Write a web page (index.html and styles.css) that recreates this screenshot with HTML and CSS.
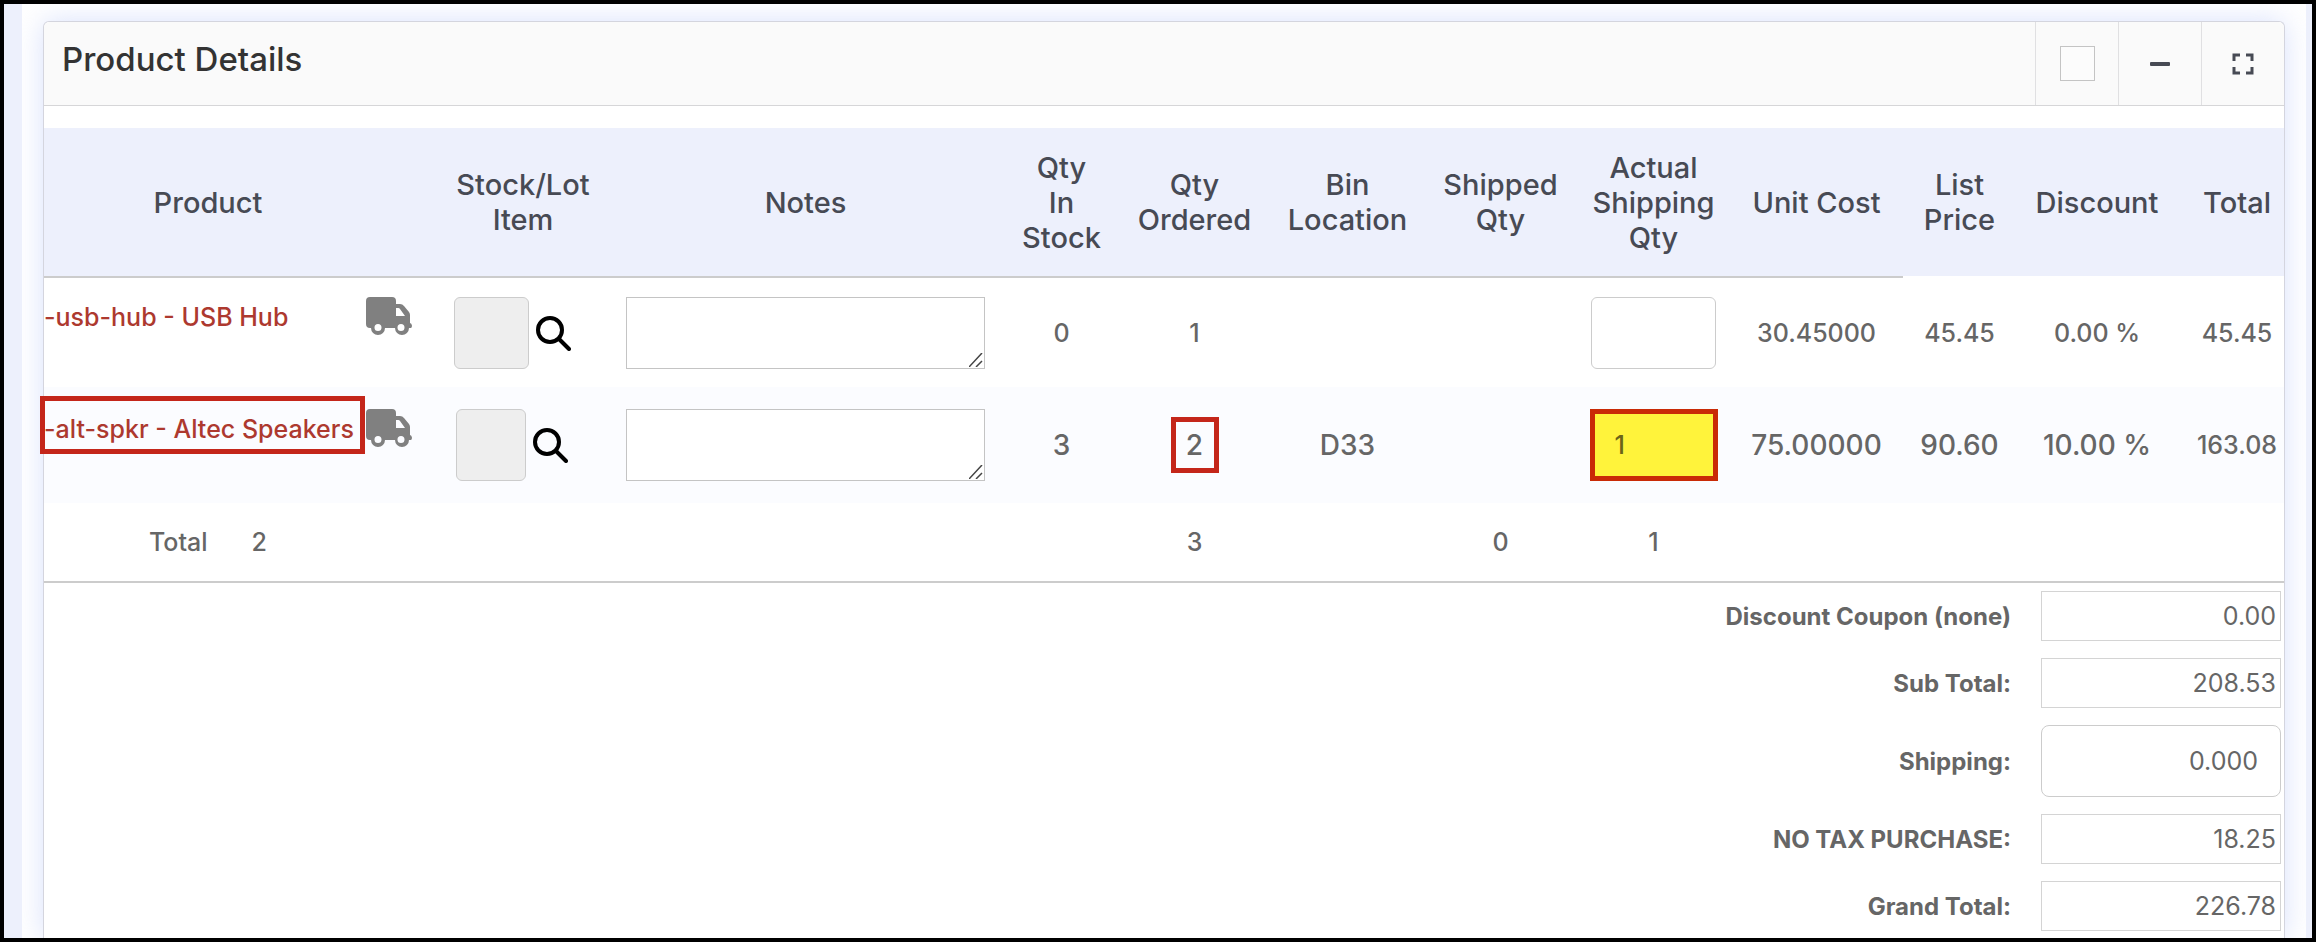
FILE: index.html
```html
<!DOCTYPE html>
<html lang="en">
<head>
    <meta charset="UTF-8">
    <meta name="viewport" content="width=device-width, initial-scale=1.0">
    <title>Product Details</title>
    <link rel="stylesheet" href="styles.css">
</head>
<body>

    <svg class="sprite" aria-hidden="true">
        <symbol id="truck" viewBox="0 0 46 38">
            <path fill-rule="evenodd" d="M4 0h22a4 4 0 0 1 4 4v3h4a5 5 0 0 1 4 2l5 6a5 5 0 0 1 1 3v8a3 3 0 0 1 1 5h-2a7 7 0 0 1-14 0H19a7 7 0 0 1-14 0H4a4 4 0 0 1-4-4V4a4 4 0 0 1 4-4zM30 11v8h9l-5-7a2 2 0 0 0-2-1zM12 27a3 3 0 1 0 0 7a3 3 0 1 0 0-7zM35 27a3 3 0 1 0 0 7a3 3 0 1 0 0-7z"/>
        </symbol>
        <symbol id="search" viewBox="0 0 36 36">
            <circle cx="15" cy="15" r="12" fill="none" stroke="currentColor" stroke-width="4"/>
            <path d="M24 24l10 10" stroke="currentColor" stroke-width="4" stroke-linecap="round"/>
        </symbol>
        <symbol id="grip" viewBox="0 0 14 14">
            <path d="M0 14L13 0M7 14l6-6" fill="none" stroke="#444" stroke-width="1.5"/>
        </symbol>
    </svg>

    <main class="page">
        <section class="card">
            <header class="card-header">
                <h1>Product Details</h1>
                <div class="tools">
                    <label class="tool"><input type="checkbox" aria-label="Select product details"></label>
                    <button type="button" class="tool" aria-label="Collapse">
                        <svg width="20" height="4" viewBox="0 0 20 4"><rect width="20" height="4" rx="1"/></svg>
                    </button>
                    <button type="button" class="tool" aria-label="Full screen">
                        <svg width="22" height="24" viewBox="0 0 22 24"><path d="M2 9V3h6M14 3h6v6M2 15v6h6M14 21h6v-6" fill="none" stroke="currentColor" stroke-width="3"/></svg>
                    </button>
                </div>
            </header>

            <table class="items">
                <colgroup>
                    <col class="col-product">
                    <col class="col-stock">
                    <col class="col-notes">
                    <col class="col-short">
                    <col class="col-qty">
                    <col class="col-qty">
                    <col class="col-qty">
                    <col class="col-qty">
                    <col class="col-cost">
                    <col class="col-short">
                    <col class="col-discount">
                    <col class="col-total">
                </colgroup>
                <thead>
                    <tr>
                        <th class="product">Product</th>
                        <th>Stock/Lot<br>Item</th>
                        <th>Notes</th>
                        <th>Qty<br>In<br>Stock</th>
                        <th>Qty<br>Ordered</th>
                        <th>Bin<br>Location</th>
                        <th>Shipped<br>Qty</th>
                        <th>Actual<br>Shipping<br>Qty</th>
                        <th>Unit Cost</th>
                        <th class="plain">List<br>Price</th>
                        <th class="plain">Discount</th>
                        <th class="plain total">Total</th>
                    </tr>
                </thead>
                <tbody>
                    <tr>
                        <td>
                            <div class="product-cell">
                                <a href="#">-usb-hub - USB Hub</a>
                                <svg class="truck"><use href="#truck"/></svg>
                            </div>
                        </td>
                        <td>
                            <div class="stock-cell">
                                <input type="text" class="lot" aria-label="Stock or lot item" disabled>
                                <button type="button" class="search" aria-label="Find lot"><svg><use href="#search"/></svg></button>
                            </div>
                        </td>
                        <td>
                            <div class="notes-cell">
                                <textarea aria-label="Notes"></textarea>
                                <svg class="grip"><use href="#grip"/></svg>
                            </div>
                        </td>
                        <td>0</td>
                        <td>1</td>
                        <td></td>
                        <td></td>
                        <td><input type="text" class="ship-qty" aria-label="Actual shipping qty"></td>
                        <td>30.45000</td>
                        <td>45.45</td>
                        <td>0.00 %</td>
                        <td class="total">45.45</td>
                    </tr>
                    <tr class="current">
                        <td>
                            <div class="product-cell marked">
                                <a href="#">-alt-spkr - Altec Speakers</a>
                                <svg class="truck"><use href="#truck"/></svg>
                            </div>
                        </td>
                        <td>
                            <div class="stock-cell">
                                <input type="text" class="lot" aria-label="Stock or lot item" disabled>
                                <button type="button" class="search" aria-label="Find lot"><svg><use href="#search"/></svg></button>
                            </div>
                        </td>
                        <td>
                            <div class="notes-cell">
                                <textarea aria-label="Notes"></textarea>
                                <svg class="grip"><use href="#grip"/></svg>
                            </div>
                        </td>
                        <td>3</td>
                        <td><span class="marked-qty">2</span></td>
                        <td>D33</td>
                        <td></td>
                        <td><input type="text" class="ship-qty short" value="1" aria-label="Actual shipping qty"></td>
                        <td>75.00000</td>
                        <td>90.60</td>
                        <td>10.00 %</td>
                        <td class="total">163.08</td>
                    </tr>
                </tbody>
                <tfoot>
                    <tr>
                        <td class="product"><span class="count-label">Total</span>2</td>
                        <td></td>
                        <td></td>
                        <td></td>
                        <td>3</td>
                        <td></td>
                        <td>0</td>
                        <td>1</td>
                        <td></td>
                        <td></td>
                        <td></td>
                        <td></td>
                    </tr>
                </tfoot>
            </table>

            <form class="summary">
                <label for="coupon">Discount Coupon (none)</label>
                <input type="text" id="coupon" value="0.00" readonly>

                <label for="sub_total">Sub Total:</label>
                <input type="text" id="sub_total" value="208.53" readonly>

                <label for="shipping">Shipping:</label>
                <input type="text" id="shipping" class="editable" value="0.000">

                <label for="tax">NO TAX PURCHASE:</label>
                <input type="text" id="tax" value="18.25" readonly>

                <label for="grand_total">Grand Total:</label>
                <input type="text" id="grand_total" value="226.78" readonly>
            </form>
        </section>
    </main>

</body>
</html>
```
FILE: styles.css
```css
*,
*::before {
    box-sizing: border-box;
}

body {
    margin: 0;
    min-height: 100vh;
    display: flex;
    border: 4px solid #000;
    background: #edf0fc;
    font-family: Inter, "Liberation Sans", sans-serif;
    font-size: 25px;
    font-weight: 500;
    color: #666;
}

input, textarea, button {
    font: inherit;
    color: inherit;
    margin: 0;
}

.sprite {
    position: absolute;
    width: 0;
    height: 0;
}

.page {
    flex: 1;
    display: flex;
    margin: 0 6px 0 18px;
    padding: 17px 21px 0;
    background: #fff;
    overflow: hidden;
}

.card {
    flex: 1;
    min-width: 0;
    border: 1px solid #d4d5de;
    border-bottom: 0;
    border-radius: 6px 6px 0 0;
    background: #fff;
    box-shadow: 0 0 28px rgba(180, 195, 250, 0.5);
}

.card-header {
    display: flex;
    justify-content: space-between;
    height: 84px;
    border-bottom: 1px solid #d6d6d8;
    border-radius: 6px 6px 0 0;
    background: #fafafa;
}

.card-header h1 {
    margin: 0;
    padding-left: 18px;
    font-size: 33px;
    font-weight: 500;
    line-height: 74px;
    color: #333;
}

.tools {
    display: flex;
}

.tool {
    display: flex;
    align-items: center;
    justify-content: center;
    width: 83px;
    padding: 0;
    border: 0;
    border-left: 1px solid #e0e0e2;
    background: none;
    color: #474a54;
    fill: #474a54;
}

.tool input {
    appearance: none;
    width: 35px;
    height: 35px;
    border: 1px solid #c4c4c4;
    background: #fcfcfc;
}

.items {
    width: 100%;
    margin-top: 22px;
    table-layout: fixed;
    border-spacing: 0;
    text-align: center;
}

.col-product { width: 396px; }
.col-stock { width: 166px; }
.col-short { width: 113px; }
.col-qty { width: 153px; }
.col-cost { width: 173px; }
.col-discount { width: 162px; }
.col-total { width: 106px; }

.items th,
.items td {
    padding: 0;
}

.items th {
    height: 150px;
    border-bottom: 2px solid #ccc;
    background: #edf0fc;
    background-clip: padding-box;
    font-size: 29px;
    font-weight: 500;
    line-height: 35px;
    color: #474a54;
}

.items th.plain {
    border-bottom-color: transparent;
}

.items .product {
    padding-right: 68px;
}

.items .total {
    padding-left: 12px;
}

.items tbody td {
    height: 109px;
}

.items tbody .current td {
    height: 116px;
    background: #fbfcff;
    font-size: 28px;
}

.items tbody .current .total {
    font-size: 25px;
}

.items tfoot td {
    height: 80px;
    border-bottom: 2px solid #ccc;
}

.count-label {
    margin-right: 44px;
}

.product-cell {
    position: relative;
    display: flex;
    justify-content: space-between;
    height: 72px;
    padding-right: 28px;
    font-size: 25px;
    line-height: 40px;
    white-space: nowrap;
}

.product-cell a {
    color: #ad392f;
    text-decoration: none;
}

.truck {
    width: 46px;
    height: 38px;
    fill: #808080;
}

/* frame round the product name */
.marked::before {
    content: "";
    position: absolute;
    top: -13px;
    left: -4px;
    right: 75px;
    height: 58px;
    border: 5px solid #c4261a;
}

.marked-qty {
    display: inline-block;
    width: 48px;
    border: 5px solid #c4261a;
    line-height: 46px;
    vertical-align: middle;
}

.stock-cell {
    display: flex;
    align-items: center;
    justify-content: center;
    gap: 6px;
    padding-right: 22px;
}

.lot {
    width: 75px;
    height: 72px;
    border: 1px solid #ccc;
    border-radius: 6px;
    background: #eee;
}

.current .lot {
    width: 70px;
}

.search {
    width: 36px;
    height: 36px;
    padding: 0;
    border: 0;
    background: none;
    color: #000;
}

.search svg {
    display: block;
    width: 36px;
    height: 36px;
}

.notes-cell {
    position: relative;
    margin: 0 20px;
}

.notes-cell textarea {
    display: block;
    width: 100%;
    height: 72px;
    border: 1px solid #c4c4c4;
    background: #fff;
    resize: none;
}

.grip {
    position: absolute;
    right: 2px;
    bottom: 2px;
    width: 14px;
    height: 14px;
}

.ship-qty {
    display: block;
    width: 125px;
    height: 72px;
    margin: 0 auto;
    padding: 0 22px;
    border: 1px solid #ccc;
    border-radius: 6px;
    background: #fff;
    font-size: 25px;
}

.ship-qty.short {
    width: 128px;
    padding: 0 20px;
    border: 5px solid #c92a06;
    border-radius: 0;
    background: #fff33b;
    color: #6b6418;
}

.summary {
    display: grid;
    grid-template-columns: 1fr 240px;
    align-items: center;
    gap: 17px 30px;
    padding: 8px 3px 6px 0;
}

.summary label {
    font-size: 24px;
    font-weight: 700;
    text-align: right;
}

.summary input {
    width: 100%;
    height: 50px;
    padding: 0 4px;
    border: 1px solid #d4d4d4;
    background: #fff;
    font-weight: 400;
    text-align: right;
}

.summary .editable {
    height: 72px;
    padding: 0 14px;
    padding-right: 22px;
    border-color: #ccc;
    border-radius: 8px;
}
```
